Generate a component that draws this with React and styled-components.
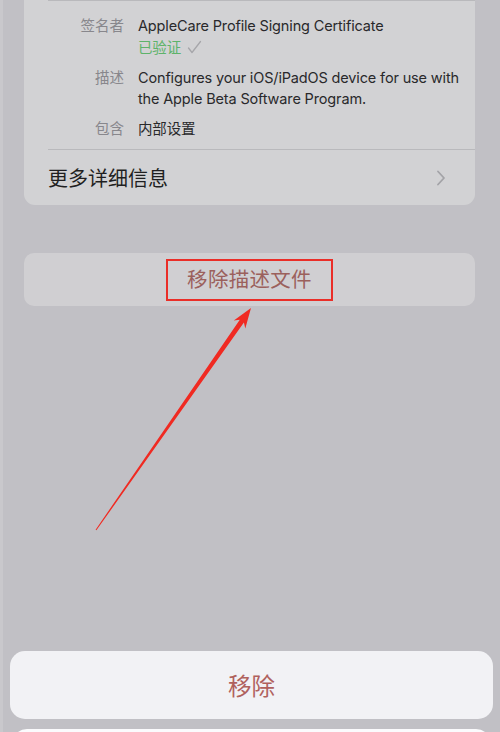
import React from "react";
import styled, { createGlobalStyle } from "styled-components";

const Global = createGlobalStyle`
  html, body { margin: 0; padding: 0; }
  body {
    background: #c1c0c5;
    font-family: "Inter", "Noto Sans CJK SC", sans-serif;
    -webkit-font-smoothing: antialiased;
  }
`;

const Page = styled.div`
  position: relative;
  height: 732px;
  overflow: hidden;
  display: flex;
  flex-direction: column;
  background: #c1c0c5;
  border-left: 3px solid #c9c8cc;
  box-sizing: border-box;
`;

const InfoCard = styled.section`
  margin: 0 25px 0 21px;
  background: #d2d2d4;
  border-radius: 0 0 11px 11px;
  padding-left: 24px;
  display: flex;
  flex-direction: column;
`;

const Divider = styled.div`
  height: 1px;
  background: #b9b9bc;
`;

const Details = styled.dl`
  margin: 0;
  padding: 14px 0 10px;
  display: grid;
  grid-template-columns: 76px 1fr;
  column-gap: 14px;
  row-gap: 9px;
  font-size: 14.5px;
  line-height: 21px;
`;

const Label = styled.dt`
  text-align: right;
  color: #88878c;
`;

const Value = styled.dd`
  margin: 0;
  color: #29292b;
  padding-right: 2px;
  letter-spacing: -0.15px;
`;

const Verified = styled.div`
  color: #5db36a;
  display: flex;
  align-items: center;
  gap: 6px;
  margin-top: 1px;
`;

const MoreRow = styled.div`
  height: 55px;
  display: flex;
  align-items: center;
  justify-content: space-between;
  padding-right: 28px;
  font-size: 20px;
  color: #1f1f21;
`;

const ActionCard = styled.div`
  margin: 48px 25px 0 21px;
  height: 53px;
  background: #d0cfd2;
  border-radius: 10px;
  display: flex;
  align-items: center;
  justify-content: center;
`;

const Highlight = styled.span`
  border: 2px solid #ea2e28;
  padding: 8px 19px;
  font-size: 20.5px;
  line-height: 22px;
  color: #9b605c;
  letter-spacing: 0.3px;
`;

const Sheet = styled.div`
  margin-top: auto;
  display: flex;
  flex-direction: column;
  gap: 10px;
  padding: 0 7px;
  margin-bottom: -40px;
`;

const SheetButton = styled.div`
  height: 68px;
  background: #f2f2f5;
  border-radius: 15px;
  display: flex;
  align-items: center;
  justify-content: center;
  font-size: 23.5px;
  color: #b0615d;
`;

const SheetCard = styled.div`
  height: 43px;
  margin: 0 2px;
  background: #fbfbfd;
  border-radius: 15px;
`;

const Overlay = styled.svg`
  position: absolute;
  left: 0;
  top: 0;
  pointer-events: none;
`;

function Chevron() {
  return (
    <svg width="12" height="18" viewBox="0 0 12 18">
      <path d="M3 2.5 L9 9 L3 15.5" fill="none" stroke="#a3a3a7" strokeWidth="1.8" strokeLinecap="round" strokeLinejoin="round" />
    </svg>
  );
}

function CheckMark() {
  return (
    <svg width="15" height="15" viewBox="0 0 15 15">
      <path d="M1.5 8 L5 12.5 L13.5 1.5" fill="none" stroke="#a6a6aa" strokeWidth="1.3" strokeLinecap="round" strokeLinejoin="round" />
    </svg>
  );
}

export default function App() {
  return (
    <>
      <Global />
      <Page>
        <InfoCard>
          <Divider />
          <Details>
            <Label>签名者</Label>
            <Value>
              AppleCare Profile Signing Certificate
              <Verified>
                已验证 <CheckMark />
              </Verified>
            </Value>
            <Label>描述</Label>
            <Value>Configures your iOS/iPadOS device for use with the Apple Beta Software Program.</Value>
            <Label>包含</Label>
            <Value>内部设置</Value>
          </Details>
          <Divider />
          <MoreRow>
            <span>更多详细信息</span>
            <Chevron />
          </MoreRow>
        </InfoCard>
        <ActionCard>
          <Highlight>移除描述文件</Highlight>
        </ActionCard>
        <Sheet>
          <SheetButton>移除</SheetButton>
          <SheetCard />
        </Sheet>
        <Overlay width="500" height="732" viewBox="0 0 500 732">
          <polygon
            points="92.6,529.7 236.8,319.7 230.8,320.4 248,308 242.3,328.4 240.9,322.6 93.4,530.3"
            fill="#f02a22"
          />
        </Overlay>
      </Page>
    </>
  );
}
